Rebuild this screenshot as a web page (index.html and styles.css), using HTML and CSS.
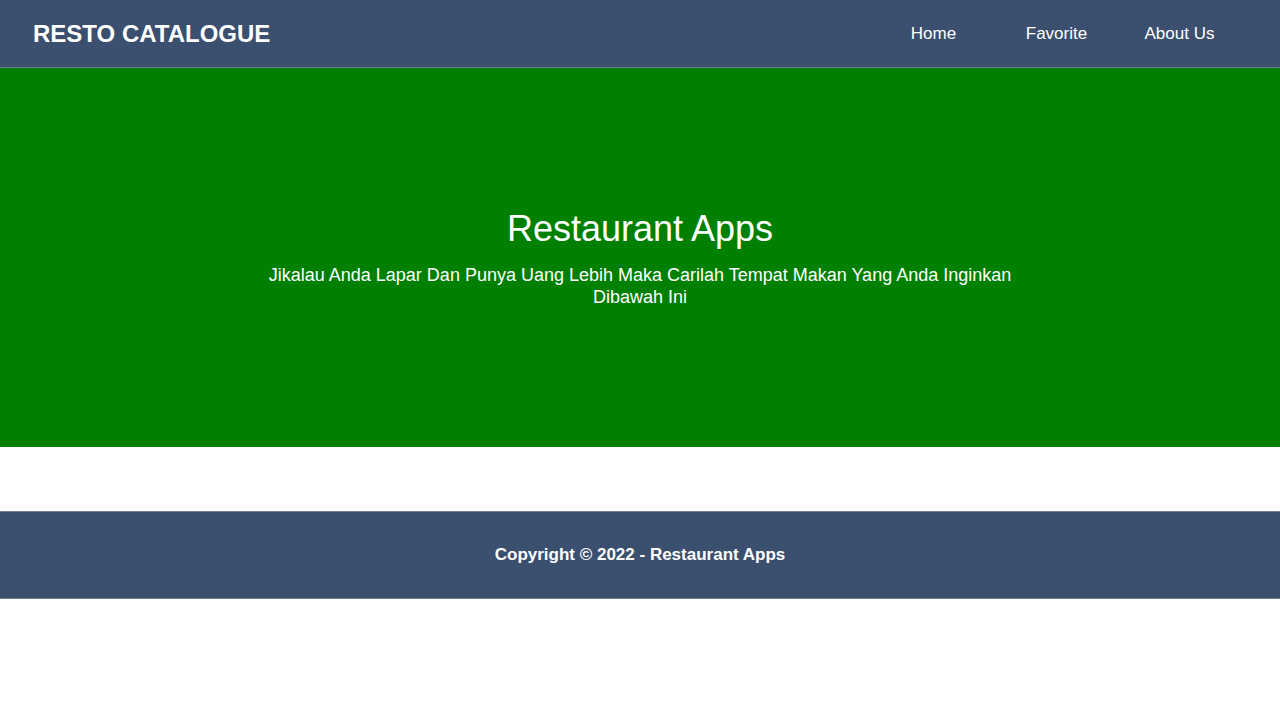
FILE: index.html
```html
<!DOCTYPE html>
<html lang="id">
<head>
<meta charset="utf-8">
<title>Resto Catalogue</title>
<link rel="stylesheet" href="styles.css">
</head>
<body>
<header class="app-bar">
  <h1 class="brand">RESTO CATALOGUE</h1>
  <nav class="nav">
    <a class="nav-link" href="#">Home</a>
    <a class="nav-link" href="#">Favorite</a>
    <a class="nav-link" href="#">About Us</a>
  </nav>
</header>
<section class="hero">
  <div class="hero-inner">
    <h2 class="hero-title">Restaurant Apps</h2>
    <p class="hero-text">Jikalau Anda Lapar Dan Punya Uang Lebih Maka Carilah Tempat Makan Yang Anda Inginkan Dibawah Ini</p>
  </div>
</section>
<main class="content"></main>
<footer class="footer">
  <p class="footer-text">Copyright © 2022 - Restaurant Apps</p>
</footer>
</body>
</html>
```
FILE: styles.css
```css
* { box-sizing: border-box; }
body {
  margin: 0;
  font-family: "Liberation Sans", Arial, sans-serif;
  background: #ffffff;
  color: #ffffff;
}
.app-bar {
  height: 68px;
  background: #3b4f6f;
  border-bottom: 1px solid #6f7c8f;
  display: flex;
  align-items: center;
  justify-content: space-between;
  padding: 0 39px 0 33px;
}
.brand {
  margin: 0;
  font-size: 24px;
  font-weight: bold;
  color: #ffffff;
}
.nav {
  display: grid;
  grid-template-columns: repeat(3, 123px);
}
.nav-link {
  color: #ffffff;
  text-decoration: none;
  font-size: 17px;
  text-align: center;
}
.hero {
  height: 379px;
  background: #008000;
  display: flex;
  align-items: center;
  justify-content: center;
}
.hero-inner {
  width: 768px;
  text-align: center;
}
.hero-title {
  margin: 0 0 14px;
  font-size: 36px;
  font-weight: normal;
}
.hero-text {
  margin: 0;
  font-size: 18px;
  line-height: 22px;
}
.content {
  height: 64px;
}
.footer {
  height: 88px;
  background: #3b4f6f;
  border-top: 1px solid #6f7c8f;
  border-bottom: 1px solid #6f7c8f;
  display: flex;
  align-items: center;
  justify-content: center;
}
.footer-text {
  margin: 0;
  font-size: 17px;
  font-weight: bold;
}
```
